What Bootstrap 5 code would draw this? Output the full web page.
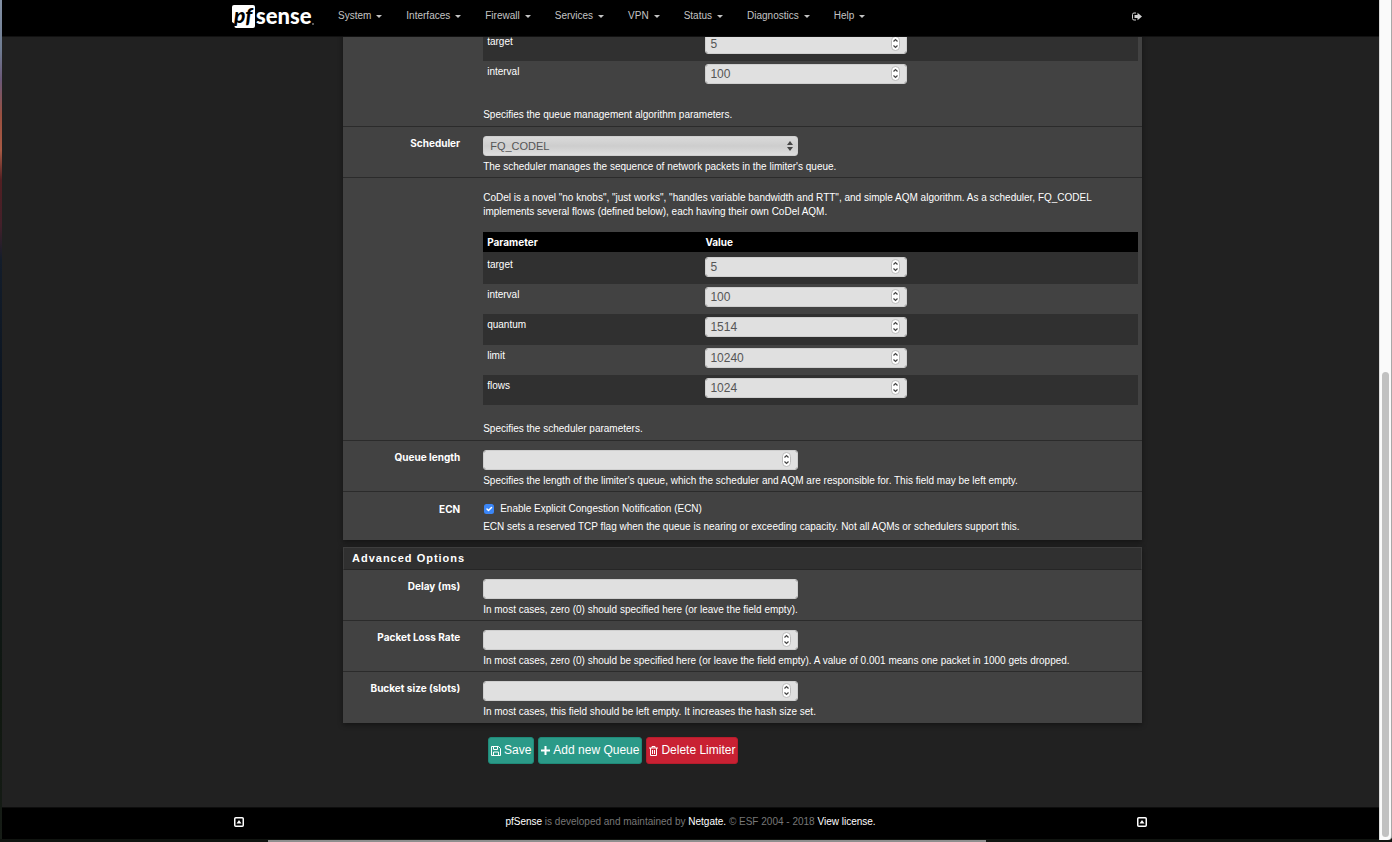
<!DOCTYPE html>
<html lang="en">
<head>
<meta charset="utf-8">
<meta name="viewport" content="width=device-width, initial-scale=1">
<title>pfSense - Limiters</title>
<link href="https://cdn.jsdelivr.net/npm/bootstrap@5.3.0/dist/css/bootstrap.min.css" rel="stylesheet">
<style>
:root { --frame: 2px; --scroll: 13px; --strong: Inter, "Liberation Sans", sans-serif; }
body { background: #212121; color: #fff; font: 10px/14px "Liberation Sans", Arial, sans-serif; min-height: 100vh; overflow: hidden; padding: 0 var(--scroll) 3px var(--frame); display: flex; flex-direction: column; }
.wrap { width: 100%; max-width: 917px; margin: 0 auto; }
/* desktop around the browser window */
.desk-left { position: fixed; left: 0; top: 0; bottom: 0; width: var(--frame);
  background: linear-gradient(#8290a4 0, #6f7c92 50px, #6b5878 80px, #9a5040 115px, #a85a44 150px, #521f22 180px, #43202a 225px, #131d2b 260px, #0b1420 400px, #101810 700px, #161c16 100%); }
.desk-bottom { position: fixed; left: 0; right: 0; bottom: 0; height: 3px; background: #101410; z-index: 1040; }
.desk-bottom span { position: absolute; left: 19.25%; right: 29.15%; bottom: 0; height: 2px; background: #8f8f8f; }
.scroll-track { position: fixed; right: 0; top: 0; bottom: 2px; width: var(--scroll); background: #fafafa; border-left: 1px solid #dcdcdc; border-right: 1px solid #a8a8a8; border-bottom-right-radius: 4px; z-index: 1041; }
.scroll-thumb { position: absolute; left: 2px; top: 372px; bottom: 3px; width: 7px; border-radius: 4px; background: #c1c1c1; }

.topbar { position: fixed; left: var(--frame); right: var(--scroll); top: 0; height: 37px; background: #000; border-bottom: 1px solid #111; z-index: 1030; }
.topbar .wrap { height: 32px; }
.brand-logo { width: 84px; height: 28px; margin-right: 10px; display: block; }
.topbar .nav-link { color: #c4c4c4; padding: 0 12px; line-height: 20px; display: flex; align-items: center; gap: 5px; }
.topbar .nav-link::after { margin: 1px 0 0; border-top: 3px solid; border-left: 3px solid transparent; border-right: 3px solid transparent; }
.logout { color: #d0d0d0; margin-right: 7px; line-height: 0; }

main { flex: 1; padding-top: 9px; }
.sheet { margin: 0 7px 0 111px; }
.panel { background: #424242; box-shadow: 0 2px 5px rgba(0,0,0,.4); margin-bottom: 7px; }
.panel-title { font-size: 11px; line-height: 21px; font-weight: 700; letter-spacing: 1px; margin: 0; padding: 0 8px; background: #303030; border: 1px solid #3e3e3e; border-bottom-color: #262626; color: #fff; }
.field { --bs-gutter-x: 0; border-bottom: 1px solid #2b2b2b; padding: 9px 0 3px; }
.field:last-child { border-bottom: 0; padding-bottom: 4px; }
.field.params { padding: 13px 0 4px; }
.field.params.clipped { padding-top: 0; }
.field.ticks { padding: 10px 0 6px; }
.field .name { font-family: var(--strong); text-align: right; font-weight: 700; padding-right: 16px; }
.field .body { padding: 0 4px 0 7px; }
.field p { margin: 4px 0 0; }
.field .intro { margin: 0 0 13px; }
.field .after { margin-top: 17px; }
.box { position: relative; max-width: 315px; }
.box-sm { max-width: 202px; margin-top: -1px; }
.box .form-control, .box .form-select { height: 20px; min-height: 0; padding: 0 4px; font-size: 12px; line-height: 18px; color: #555; background-color: #e0e0e0; border: 1px solid #cfcfcf; border-radius: 3px; appearance: none; -moz-appearance: textfield; }
.box .form-select { padding: 0 6px; font-size: 11px; background: linear-gradient(#dadada, #cdcdcd 50%, #dedede); }
.box input::-webkit-inner-spin-button { appearance: none; margin: 0; }
.box svg { position: absolute; right: 7px; top: 2px; pointer-events: none; }
.box .updown { right: 5px; top: 4px; }
.grid { width: 100%; table-layout: fixed; border-collapse: separate; border-spacing: 0; }
.grid th { font-family: var(--strong); background: #000; height: 20px; padding: 0 4px; }
.grid td { height: 30px; padding: 4px 4px 0; vertical-align: top; }
.grid tbody tr:nth-child(odd) td { background: #303030; height: 31px; }
.grid tbody tr:first-child td { height: 32px; padding-top: 6px; }
.grid tbody tr:last-child td { height: 30px; }
.tick { width: 10px; height: 10px; margin: 0 6px 0 1px; float: none; border: 0; border-radius: 2px; }
.tick:checked { background-color: #3b86f7; }
.actions { margin: 14px 0 0 145px; }
.actions .btn { height: 27px; padding: 0 2px; font-size: 12px; line-height: 25px; color: #fff; border-radius: 3px; display: flex; align-items: center; gap: 3px; }
.go { background: #2b9a88; border-color: #1f8a79; }
.stop { background: #c92133; border-color: #b71c2c; }
.foot { background: #000; color: #777; height: 32px; border-top: 1px solid #0d0d0d; }
.foot .wrap { padding: 0 2px 3px; }
.foot a { color: #fff; text-decoration: none; }
.foot .edge { line-height: 0; }
</style>
</head>
<body>
<div class="desk-left"></div>

<nav class="topbar">
  <div class="wrap d-flex align-items-center">
    <a href="#" aria-label="pfSense" class="flex-shrink-0"><svg class="brand-logo" viewBox="0 0 84 28">
      <path d="M2 3H21Q23 3 23 5V24Q23 26 21 26H4L0 24V5Q0 3 2 3Z" fill="#fff"/>
      <path d="M0 20L3 22L2 28H0Z" fill="#000"/>
      <text x="2" y="21" font-family="Lato, sans-serif" font-size="21" font-weight="900" font-style="italic" fill="#000">pf</text>
      <text x="24" y="22" font-family="Lato, sans-serif" font-size="22" font-weight="900" fill="#fff">sense</text>
      <circle cx="81" cy="22" r="1" fill="#777"/>
    </svg></a>
    <div class="nav flex-nowrap">
      <a class="nav-link dropdown-toggle" href="#">System</a>
      <a class="nav-link dropdown-toggle" href="#">Interfaces</a>
      <a class="nav-link dropdown-toggle" href="#">Firewall</a>
      <a class="nav-link dropdown-toggle" href="#">Services</a>
      <a class="nav-link dropdown-toggle" href="#">VPN</a>
      <a class="nav-link dropdown-toggle" href="#">Status</a>
      <a class="nav-link dropdown-toggle" href="#">Diagnostics</a>
      <a class="nav-link dropdown-toggle" href="#">Help</a>
    </div>
    <a class="logout ms-auto" href="#" aria-label="Logout"><svg width="10" height="9" viewBox="0 0 10 9"><path d="M4 1H2Q.5 1 .5 2.500V6.500Q.5 8 2 8H4" fill="none" stroke="currentColor"/><path d="M2.500 3H5.500V.8L10 4.500L5.500 8.200V6H2.500Z" fill="currentColor"/></svg></a>
  </div>
</nav>

<svg class="d-none">
  <symbol id="spin" viewBox="0 0 9 15"><rect x=".5" y=".5" width="8" height="14" rx="4" fill="#fff" stroke="#bbb"/><path d="M2.500 5.500L4.500 3.500L6.500 5.500M2.500 9.500L4.500 11.500L6.500 9.500" fill="none" stroke="#444" stroke-width="1.200"/></symbol>
  <symbol id="top" viewBox="0 0 10 10"><rect x=".75" y=".75" width="8.500" height="8.500" rx="1" fill="none" stroke="#fff" stroke-width="1.500"/><path d="M5 3L7.500 6.500H2.500Z" fill="#fff"/></symbol>
</svg>

<main>
  <div class="wrap">
    <form class="sheet">
      <section class="panel">
        <div class="row field params clipped">
          <div class="col-2 name"></div>
          <div class="col-10 body">
            <table class="grid">
              <thead><tr><th>Parameter</th><th>Value</th><th></th></tr></thead>
              <tbody>
                <tr><td><label for="a1">target</label></td><td><div class="box box-sm"><input id="a1" class="form-control" type="number" value="5"><svg width="9" height="15"><use href="#spin"/></svg></div></td><td></td></tr>
                <tr><td><label for="a2">interval</label></td><td><div class="box box-sm"><input id="a2" class="form-control" type="number" value="100"><svg width="9" height="15"><use href="#spin"/></svg></div></td><td></td></tr>
              </tbody>
            </table>
            <p class="after">Specifies the queue management algorithm parameters.</p>
          </div>
        </div>
        <div class="row field">
          <label class="col-2 name" for="sched">Scheduler</label>
          <div class="col-10 body">
            <div class="box"><select id="sched" class="form-select"><option>FQ_CODEL</option></select><svg class="updown" width="6" height="12" viewBox="0 0 6 12"><path d="M3 1L6 5H0ZM3 11L0 7H6Z" fill="#444"/></svg></div>
            <p>The scheduler manages the sequence of network packets in the limiter's queue.</p>
          </div>
        </div>
        <div class="row field params">
          <div class="col-2 name"></div>
          <div class="col-10 body">
            <p class="intro">CoDel is a novel "no knobs", "just works", "handles variable bandwidth and RTT", and simple AQM algorithm. As a scheduler, FQ_CODEL<br>implements several flows (defined below), each having their own CoDel AQM.</p>
            <table class="grid">
              <thead><tr><th>Parameter</th><th>Value</th><th></th></tr></thead>
              <tbody>
                <tr><td><label for="b1">target</label></td><td><div class="box box-sm"><input id="b1" class="form-control" type="number" value="5"><svg width="9" height="15"><use href="#spin"/></svg></div></td><td></td></tr>
                <tr><td><label for="b2">interval</label></td><td><div class="box box-sm"><input id="b2" class="form-control" type="number" value="100"><svg width="9" height="15"><use href="#spin"/></svg></div></td><td></td></tr>
                <tr><td><label for="b3">quantum</label></td><td><div class="box box-sm"><input id="b3" class="form-control" type="number" value="1514"><svg width="9" height="15"><use href="#spin"/></svg></div></td><td></td></tr>
                <tr><td><label for="b4">limit</label></td><td><div class="box box-sm"><input id="b4" class="form-control" type="number" value="10240"><svg width="9" height="15"><use href="#spin"/></svg></div></td><td></td></tr>
                <tr><td><label for="b5">flows</label></td><td><div class="box box-sm"><input id="b5" class="form-control" type="number" value="1024"><svg width="9" height="15"><use href="#spin"/></svg></div></td><td></td></tr>
              </tbody>
            </table>
            <p class="after">Specifies the scheduler parameters.</p>
          </div>
        </div>
        <div class="row field">
          <label class="col-2 name" for="qlen">Queue length</label>
          <div class="col-10 body">
            <div class="box"><input id="qlen" class="form-control" type="number"><svg width="9" height="15"><use href="#spin"/></svg></div>
            <p>Specifies the length of the limiter's queue, which the scheduler and AQM are responsible for. This field may be left empty.</p>
          </div>
        </div>
        <div class="row field ticks">
          <div class="col-2 name">ECN</div>
          <div class="col-10 body">
            <div class="d-flex align-items-center"><input id="ecn" class="form-check-input tick" type="checkbox" checked><label for="ecn">Enable Explicit Congestion Notification (ECN)</label></div>
            <p>ECN sets a reserved TCP flag when the queue is nearing or exceeding capacity. Not all AQMs or schedulers support this.</p>
          </div>
        </div>
      </section>

      <section class="panel">
        <h2 class="panel-title">Advanced Options</h2>
        <div class="row field">
          <label class="col-2 name" for="delay">Delay (ms)</label>
          <div class="col-10 body">
            <div class="box"><input id="delay" class="form-control" type="text"></div>
            <p>In most cases, zero (0) should specified here (or leave the field empty).</p>
          </div>
        </div>
        <div class="row field">
          <label class="col-2 name" for="plr">Packet Loss Rate</label>
          <div class="col-10 body">
            <div class="box"><input id="plr" class="form-control" type="number"><svg width="9" height="15"><use href="#spin"/></svg></div>
            <p>In most cases, zero (0) should be specified here (or leave the field empty). A value of 0.001 means one packet in 1000 gets dropped.</p>
          </div>
        </div>
        <div class="row field">
          <label class="col-2 name" for="bucket">Bucket size (slots)</label>
          <div class="col-10 body">
            <div class="box"><input id="bucket" class="form-control" type="number"><svg width="9" height="15"><use href="#spin"/></svg></div>
            <p>In most cases, this field should be left empty. It increases the hash size set.</p>
          </div>
        </div>
      </section>

      <div class="actions d-flex gap-1">
        <button type="button" class="btn go"><svg width="10" height="10" viewBox="0 0 10 10"><path d="M.5 .5H7.500L9.500 2.500V9.500H.5ZM2.500 .5V3.500H6.500V.5M2.500 9.500V6H7.500V9.500" fill="none" stroke="#fff"/></svg>Save</button>
        <button type="button" class="btn go"><svg width="9" height="9" viewBox="0 0 9 9"><path d="M4.500 0V9M0 4.500H9" stroke="#fff" stroke-width="2"/></svg>Add new Queue</button>
        <button type="button" class="btn stop"><svg width="9" height="10" viewBox="0 0 9 10"><path d="M0 2H9M3 2V.5H6V2M1.500 2V9.500H7.500V2M3.500 4V8M5.500 4V8" fill="none" stroke="#fff"/></svg>Delete Limiter</button>
      </div>
    </form>
  </div>
</main>

<footer class="foot">
  <div class="wrap d-flex justify-content-between align-items-center h-100">
    <a class="edge" href="#" aria-label="Back to top"><svg width="10" height="10"><use href="#top"/></svg></a>
    <span><a href="#">pfSense</a> is developed and maintained by <a href="#">Netgate.</a> © ESF 2004 - 2018 <a href="#">View license.</a></span>
    <a class="edge" href="#" aria-label="Back to top"><svg width="10" height="10"><use href="#top"/></svg></a>
  </div>
</footer>

<div class="desk-bottom"><span></span></div>
<div class="scroll-track"><div class="scroll-thumb"></div></div>
<script src="https://cdn.jsdelivr.net/npm/bootstrap@5.3.0/dist/js/bootstrap.bundle.min.js"></script>
</body>
</html>
